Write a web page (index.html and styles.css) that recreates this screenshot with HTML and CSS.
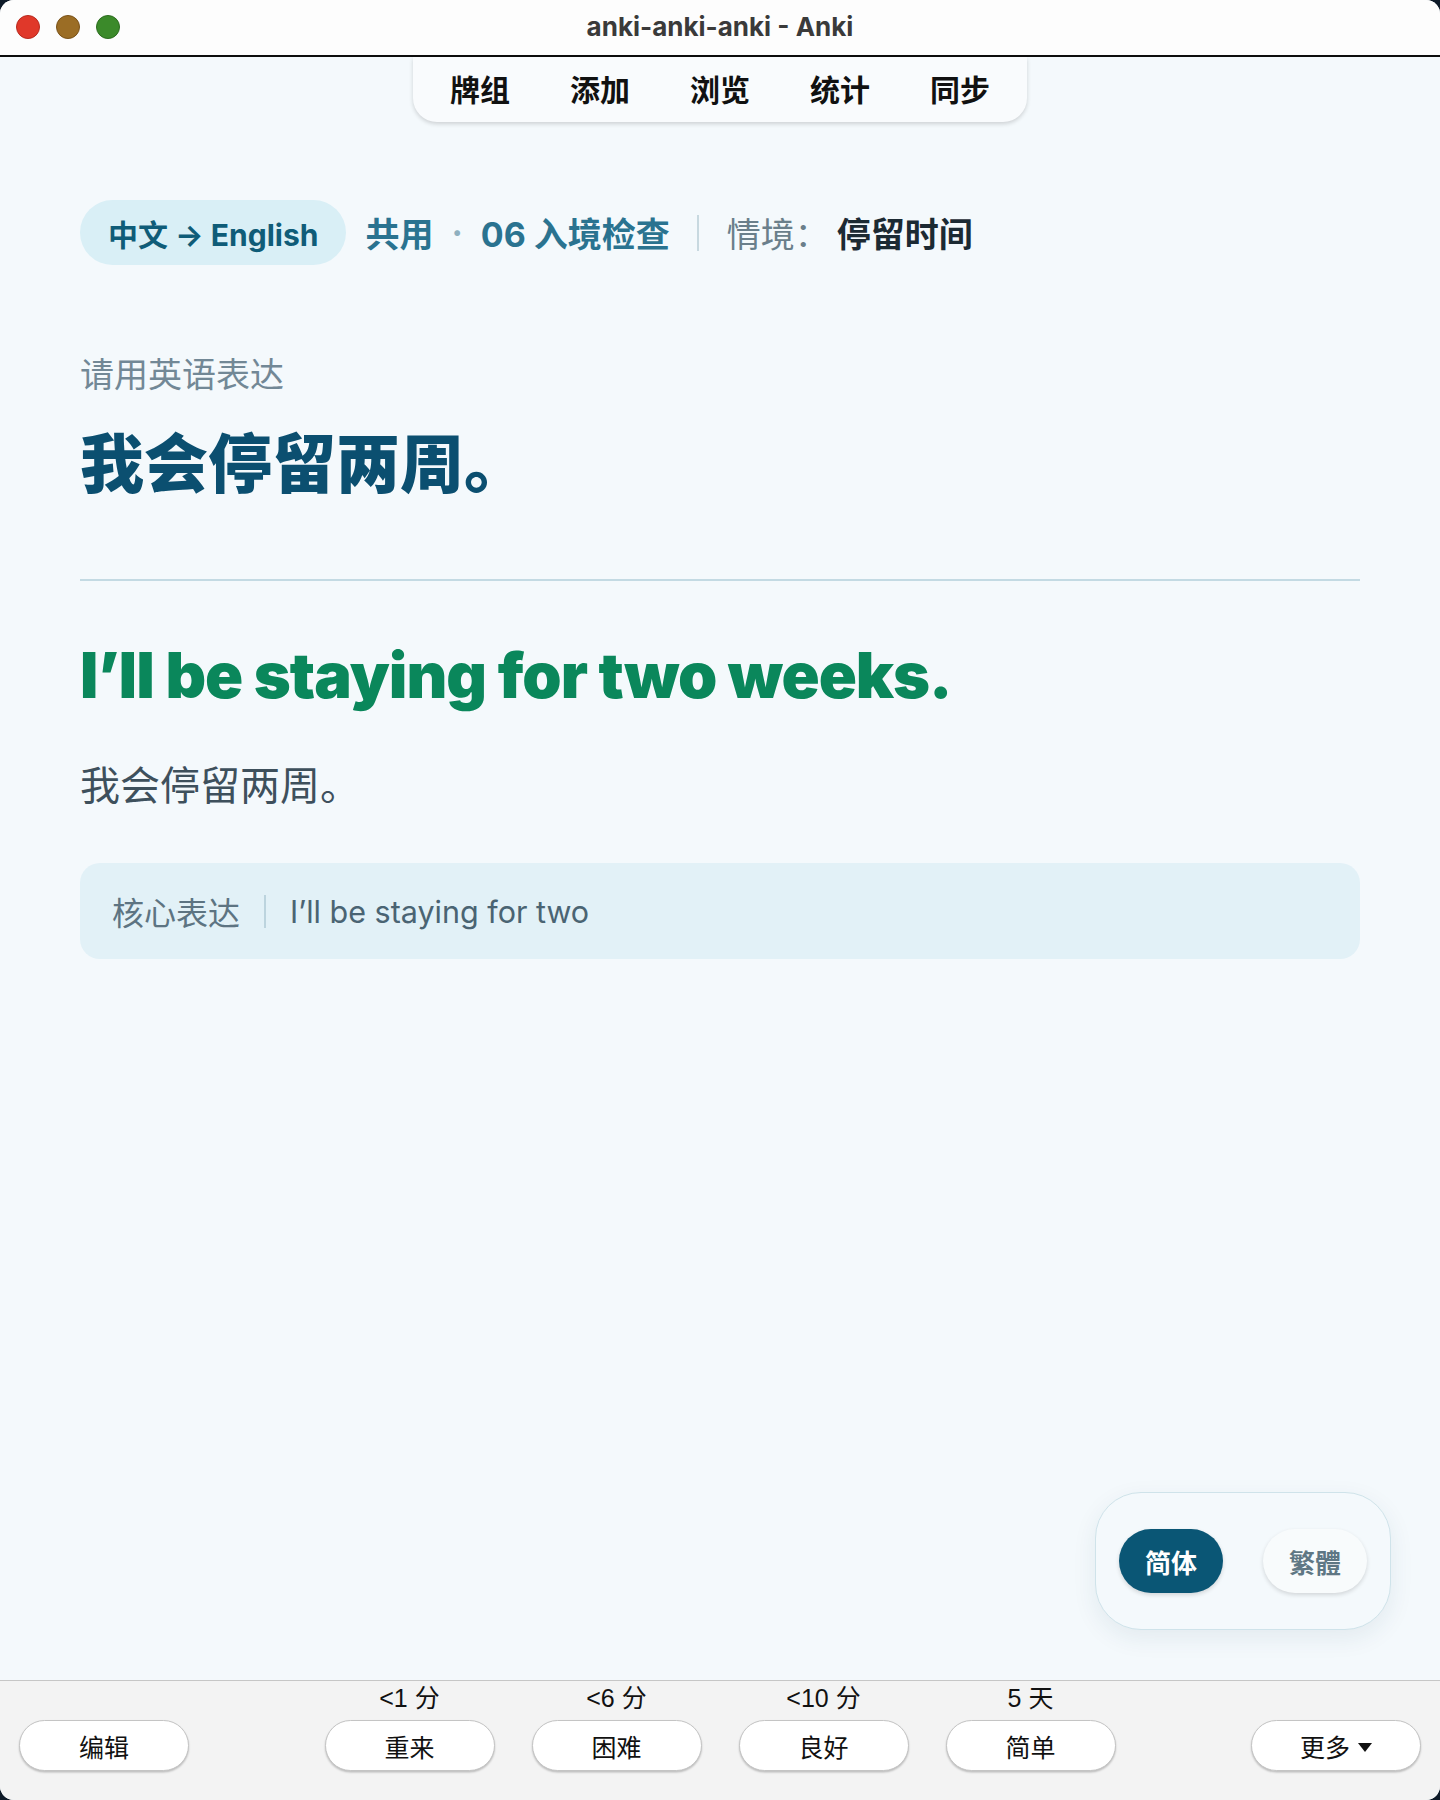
FILE: index.html
```html
<!DOCTYPE html>
<html lang="zh-CN">
<head>
    <meta charset="UTF-8">
    <meta name="viewport" content="width=device-width, initial-scale=1.0">
    <title>anki-anki-anki - Anki</title>
    <link rel="stylesheet" href="styles.css">
</head>
<body>
    <div class="window">
        <!-- Title bar with traffic lights -->
        <header class="titlebar">
            <div class="lights">
                <span class="light red"></span>
                <span class="light yellow"></span>
                <span class="light green"></span>
            </div>
            <div class="title">anki-anki-anki - Anki</div>
        </header>

        <main class="main">
            <!-- Top toolbar -->
            <nav class="toolbar">
                <a href="#">牌组</a>
                <a href="#">添加</a>
                <a href="#">浏览</a>
                <a href="#">统计</a>
                <a href="#">同步</a>
            </nav>

            <!-- Card -->
            <div class="card">
                <div class="meta">
                    <span class="pill">中文 → English</span>
                    <span class="deck">共用</span>
                    <span class="dot">·</span>
                    <span class="deck">06 入境检查</span>
                    <span class="sep"></span>
                    <span class="ctx-label">情境：</span>
                    <span class="ctx">停留时间</span>
                </div>

                <div class="prompt">请用英语表达</div>
                <h1 class="question">我会停留两周。</h1>

                <hr class="divider">

                <h2 class="answer">I’ll be staying for two weeks.</h2>
                <p class="translation">我会停留两周。</p>

                <div class="core">
                    <span class="core-label">核心表达</span>
                    <span class="core-sep"></span>
                    <span class="core-text">I’ll be staying for two</span>
                </div>
            </div>

            <!-- Simplified / traditional switch -->
            <div class="script-toggle">
                <button class="toggle active">简体</button>
                <button class="toggle">繁體</button>
            </div>
        </main>

        <!-- Answer buttons -->
        <footer class="bottombar">
            <div class="side left">
                <button class="btn">编辑</button>
            </div>
            <div class="answers">
                <div class="answer-col">
                    <span class="due">&lt;1 分</span>
                    <button class="btn">重来</button>
                </div>
                <div class="answer-col">
                    <span class="due">&lt;6 分</span>
                    <button class="btn">困难</button>
                </div>
                <div class="answer-col">
                    <span class="due">&lt;10 分</span>
                    <button class="btn">良好</button>
                </div>
                <div class="answer-col">
                    <span class="due">5 天</span>
                    <button class="btn">简单</button>
                </div>
            </div>
            <div class="side right">
                <button class="btn">更多
                    <svg class="caret" width="14" height="9" viewBox="0 0 14 9"><path d="M0 0h14L7 9z" fill="#111"/></svg>
                </button>
            </div>
        </footer>
    </div>
</body>
</html>
```

FILE: styles.css
```css
/* General Styles */
* {
    box-sizing: border-box;
}

body {
    margin: 0;
    padding: 0;
    background-color: #0e1a28;
    font-family: Inter, "Noto Sans CJK SC", sans-serif;
}

.window {
    width: 1440px;
    height: 1800px;
    display: flex;
    flex-direction: column;
    border-radius: 14px;
    overflow: hidden;
    background-color: #f4f9fc;
}

/* Title Bar */
.titlebar {
    height: 57px;
    flex-shrink: 0;
    display: flex;
    align-items: center;
    justify-content: center;
    position: relative;
    background-color: #fdfdfd;
    border-bottom: 2px solid #0d0d0d;
}

.lights {
    position: absolute;
    left: 16px;
    top: 15px;
    display: flex;
    gap: 16px;
}

.light {
    width: 24px;
    height: 24px;
    border-radius: 50%;
    border: 1px solid;
}

.light.red { background-color: #e0382a; border-color: #b82a1f; }
.light.yellow { background-color: #9b6d25; border-color: #7a5219; }
.light.green { background-color: #3b8a2a; border-color: #2c6c1f; }

.title {
    font-size: 26px;
    font-weight: 700;
    color: #3a3a3a;
    margin-top: -2px;
}

/* Main Area */
.main {
    flex: 1;
    position: relative;
}

.toolbar {
    width: 614px;
    height: 65px;
    margin: 0 auto;
    display: flex;
    justify-content: center;
    align-items: center;
    gap: 60px;
    background-color: #f9fbfd;
    border-radius: 0 0 24px 24px;
    box-shadow: 0 2px 4px rgba(0, 0, 0, 0.16);
}

.toolbar a {
    font-family: "Noto Sans CJK SC", sans-serif;
    font-size: 30px;
    font-weight: 700;
    color: #111;
    text-decoration: none;
    line-height: 1;
    margin-top: -4px;
}

/* Card */
.card {
    padding: 78px 80px 0;
}

.meta {
    display: flex;
    align-items: center;
    height: 65px;
    font-size: 34px;
    font-weight: 700;
}

.pill {
    height: 65px;
    display: flex;
    align-items: center;
    padding: 0 28px;
    border-radius: 33px;
    background-color: #d9eff6;
    color: #0f5c78;
    font-size: 30px;
    margin-right: 19px;
}

.deck {
    color: #2a7390;
}

.dot {
    color: #8fb0bf;
    margin: 0 18px;
}

.sep {
    width: 2px;
    height: 36px;
    background-color: #c8d9e0;
    margin: 0 28px 0 27px;
}

.ctx-label {
    color: #6a7f8b;
    font-weight: 400;
    margin-right: 8px;
}

.ctx {
    color: #1c2a33;
}

.prompt {
    margin-top: 88px;
    font-size: 34px;
    line-height: 44px;
    color: #728896;
}

.question {
    margin: 25px 0 0;
    font-size: 64px;
    line-height: 83px;
    font-weight: 900;
    color: #0b4f70;
}

.divider {
    margin: 74px 0 0;
    border: none;
    height: 2px;
    background-color: #c3dae3;
}

.answer {
    margin: 57px 0 0;
    font-size: 63px;
    line-height: 74px;
    font-weight: 900;
    letter-spacing: -1px;
    color: #0a875b;
}

.translation {
    margin: 46px 0 0;
    font-size: 40px;
    line-height: 56px;
    color: #3e505c;
}

.core {
    margin-top: 49px;
    height: 96px;
    display: flex;
    align-items: center;
    padding: 0 32px;
    border-radius: 20px;
    background-color: #e2f1f7;
}

.core-label {
    font-size: 32px;
    color: #5d7482;
}

.core-sep {
    width: 2px;
    height: 33px;
    background-color: #bcd4de;
    margin: 0 24px;
}

.core-text {
    font-size: 30.5px;
    color: #4a6473;
}

/* Script toggle floating panel */
.script-toggle {
    position: absolute;
    right: 49px;
    bottom: 50px;
    display: flex;
    gap: 40px;
    padding: 36px 23px;
    border: 1px solid #cfe3ea;
    border-radius: 46px;
    background-color: #f4f9fc;
    box-shadow: 0 8px 24px rgba(30, 70, 90, 0.08);
}

.toggle {
    width: 104px;
    height: 64px;
    border: none;
    border-radius: 32px;
    font-family: "Noto Sans CJK SC", sans-serif;
    font-size: 26px;
    font-weight: 700;
    color: #5f7784;
    background-color: #f8fbfc;
    box-shadow: 0 2px 4px rgba(0, 0, 0, 0.14);
}

.toggle.active {
    background-color: #0a5675;
    color: #fff;
}

/* Bottom Bar */
.bottombar {
    height: 120px;
    flex-shrink: 0;
    display: grid;
    grid-template-columns: 1fr auto 1fr;
    align-items: end;
    padding: 0 19px 29px;
    background-color: #f3f3f3;
    border-top: 1px solid #c6c6c6;
    font-family: "Liberation Sans", "Noto Sans CJK SC", sans-serif;
}

.side.right {
    display: flex;
    justify-content: flex-end;
}

.answers {
    display: flex;
    gap: 37px;
}

.answer-col {
    display: flex;
    flex-direction: column;
    align-items: center;
    gap: 7px;
}

.due {
    font-size: 25px;
    line-height: 30px;
    color: #111;
}

.btn {
    width: 170px;
    height: 51px;
    border: 1px solid #c4c4c4;
    border-radius: 26px;
    background-color: #fff;
    box-shadow: 0 1.5px 2px rgba(0, 0, 0, 0.22);
    font-family: "Liberation Sans", "Noto Sans CJK SC", sans-serif;
    font-size: 25px;
    color: #111;
    display: flex;
    align-items: center;
    justify-content: center;
    gap: 8px;
    padding: 0;
}

.caret {
    margin-top: 3px;
}
```
